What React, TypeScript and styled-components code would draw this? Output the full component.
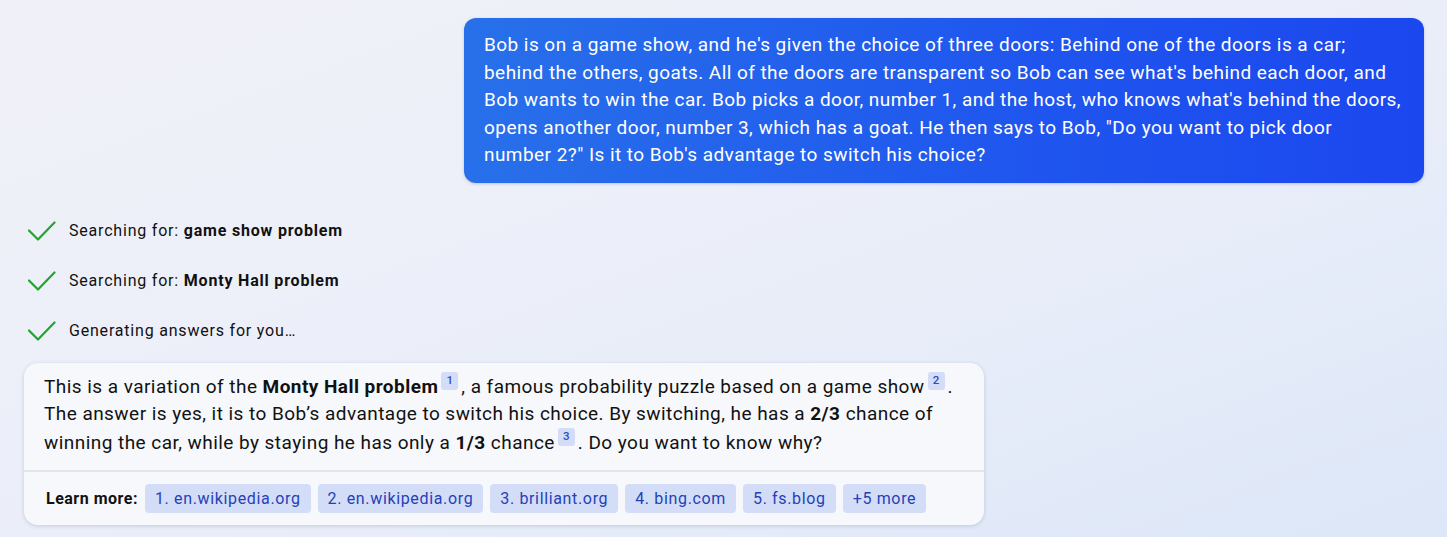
import styled, { createGlobalStyle } from 'styled-components';

const GlobalStyle = createGlobalStyle`
  html, body {
    margin: 0;
    padding: 0;
  }
  body {
    font-family: Roboto, 'Liberation Sans', Arial, sans-serif;
    background: linear-gradient(160deg, #f0f1f8 0%, #eceff9 45%, #dde7f8 100%);
    min-height: 537px;
    color: #111;
    letter-spacing: 0.05em;
  }
`;

const Page = styled.div`
  display: flex;
  flex-direction: column;
  padding: 18px 23px 0 24px;
  height: 537px;
  box-sizing: border-box;
  overflow: hidden;
`;

const UserBubble = styled.div`
  align-self: flex-end;
  width: 960px;
  box-sizing: border-box;
  padding: 13px 22px 14px 20px;
  border-radius: 12px;
  background: linear-gradient(90deg, #2870ea 0%, #1f55ee 60%, #1b47ef 100%);
  box-shadow: 0 1px 3px rgba(30, 60, 160, 0.25);
  color: #fff;
  font-size: 19px;
  letter-spacing: 0.45px;
  line-height: 27.5px;
`;

const StatusList = styled.div`
  display: flex;
  flex-direction: column;
  gap: 26px;
  margin-top: 36px;
`;

const StatusRow = styled.div`
  display: flex;
  align-items: center;
  gap: 13px;
  height: 24px;
  padding-left: 4px;
  font-size: 16px;
  color: #111;

  b {
    font-weight: 700;
  }
`;

const Card = styled.div`
  margin-top: 20px;
  width: 960px;
  border-radius: 14px;
  background: #f7f8fc;
  box-shadow: 0 1px 4px rgba(40, 50, 90, 0.18);
  overflow: hidden;
`;

const Answer = styled.div`
  padding: 9px 20px 13px;
  font-size: 19px;
  letter-spacing: 0.45px;
  line-height: 27.5px;
  color: #111;

  b {
    font-weight: 700;
  }
`;

const Cite = styled.sup`
  display: inline-flex;
  align-items: center;
  justify-content: center;
  min-width: 17px;
  height: 18px;
  margin: 0 3px 0 3px;
  border-radius: 3px;
  background: #d4ddf8;
  color: #2b4fc1;
  font-size: 11.5px;
  font-weight: 500;
  letter-spacing: 0;
  line-height: 1;
  vertical-align: 9px;
`;

const Divider = styled.div`
  height: 2px;
  background: #e2e5ec;
`;

const Footer = styled.div`
  display: flex;
  align-items: center;
  gap: 7px;
  padding: 12px 22px 12px;
`;

const FooterLabel = styled.span`
  font-size: 16px;
  font-weight: 700;
  letter-spacing: 0.5px;
  color: #111;
  margin-right: 0;
`;

const Chip = styled.span`
  display: inline-flex;
  align-items: center;
  height: 29px;
  padding: 0 10px;
  border-radius: 4px;
  background: #d3ddf8;
  color: #2441b6;
  font-size: 16px;
  letter-spacing: 0.65px;
`;

const Check = () => (
  <svg width="28" height="22" viewBox="0 0 28 22" fill="none">
    <path d="M1 10.5 L10 19.5 L26.5 2.5" stroke="#1ea62f" strokeWidth="2.2" strokeLinecap="round" strokeLinejoin="round" />
  </svg>
);

const sources = ['1. en.wikipedia.org', '2. en.wikipedia.org', '3. brilliant.org', '4. bing.com', '5. fs.blog', '+5 more'];

export default function App() {
  return (
    <>
      <GlobalStyle />
      <Page>
        <UserBubble>
          Bob is on a game show, and he's given the choice of three doors: Behind one of the doors is a car;
          behind the others, goats. All of the doors are transparent so Bob can see what's behind each door, and
          Bob wants to win the car. Bob picks a door, number 1, and the host, who knows what's behind the doors,
          opens another door, number 3, which has a goat. He then says to Bob, "Do you want to pick door
          number 2?" Is it to Bob's advantage to switch his choice?
        </UserBubble>

        <StatusList>
          <StatusRow>
            <Check />
            <span>
              Searching for: <b>game show problem</b>
            </span>
          </StatusRow>
          <StatusRow>
            <Check />
            <span>
              Searching for: <b>Monty Hall problem</b>
            </span>
          </StatusRow>
          <StatusRow>
            <Check />
            <span>Generating answers for you…</span>
          </StatusRow>
        </StatusList>

        <Card>
          <Answer>
            This is a variation of the <b>Monty Hall problem</b>
            <Cite>1</Cite>, a famous probability puzzle based on a game show<Cite>2</Cite>.
            The answer is yes, it is to Bob’s advantage to switch his choice. By switching, he has a <b>2/3</b> chance of
            winning the car, while by staying he has only a <b>1/3</b> chance<Cite>3</Cite>. Do you want to know why?
          </Answer>
          <Divider />
          <Footer>
            <FooterLabel>Learn more:</FooterLabel>
            {sources.map((s) => (
              <Chip key={s}>{s}</Chip>
            ))}
          </Footer>
        </Card>
      </Page>
    </>
  );
}
